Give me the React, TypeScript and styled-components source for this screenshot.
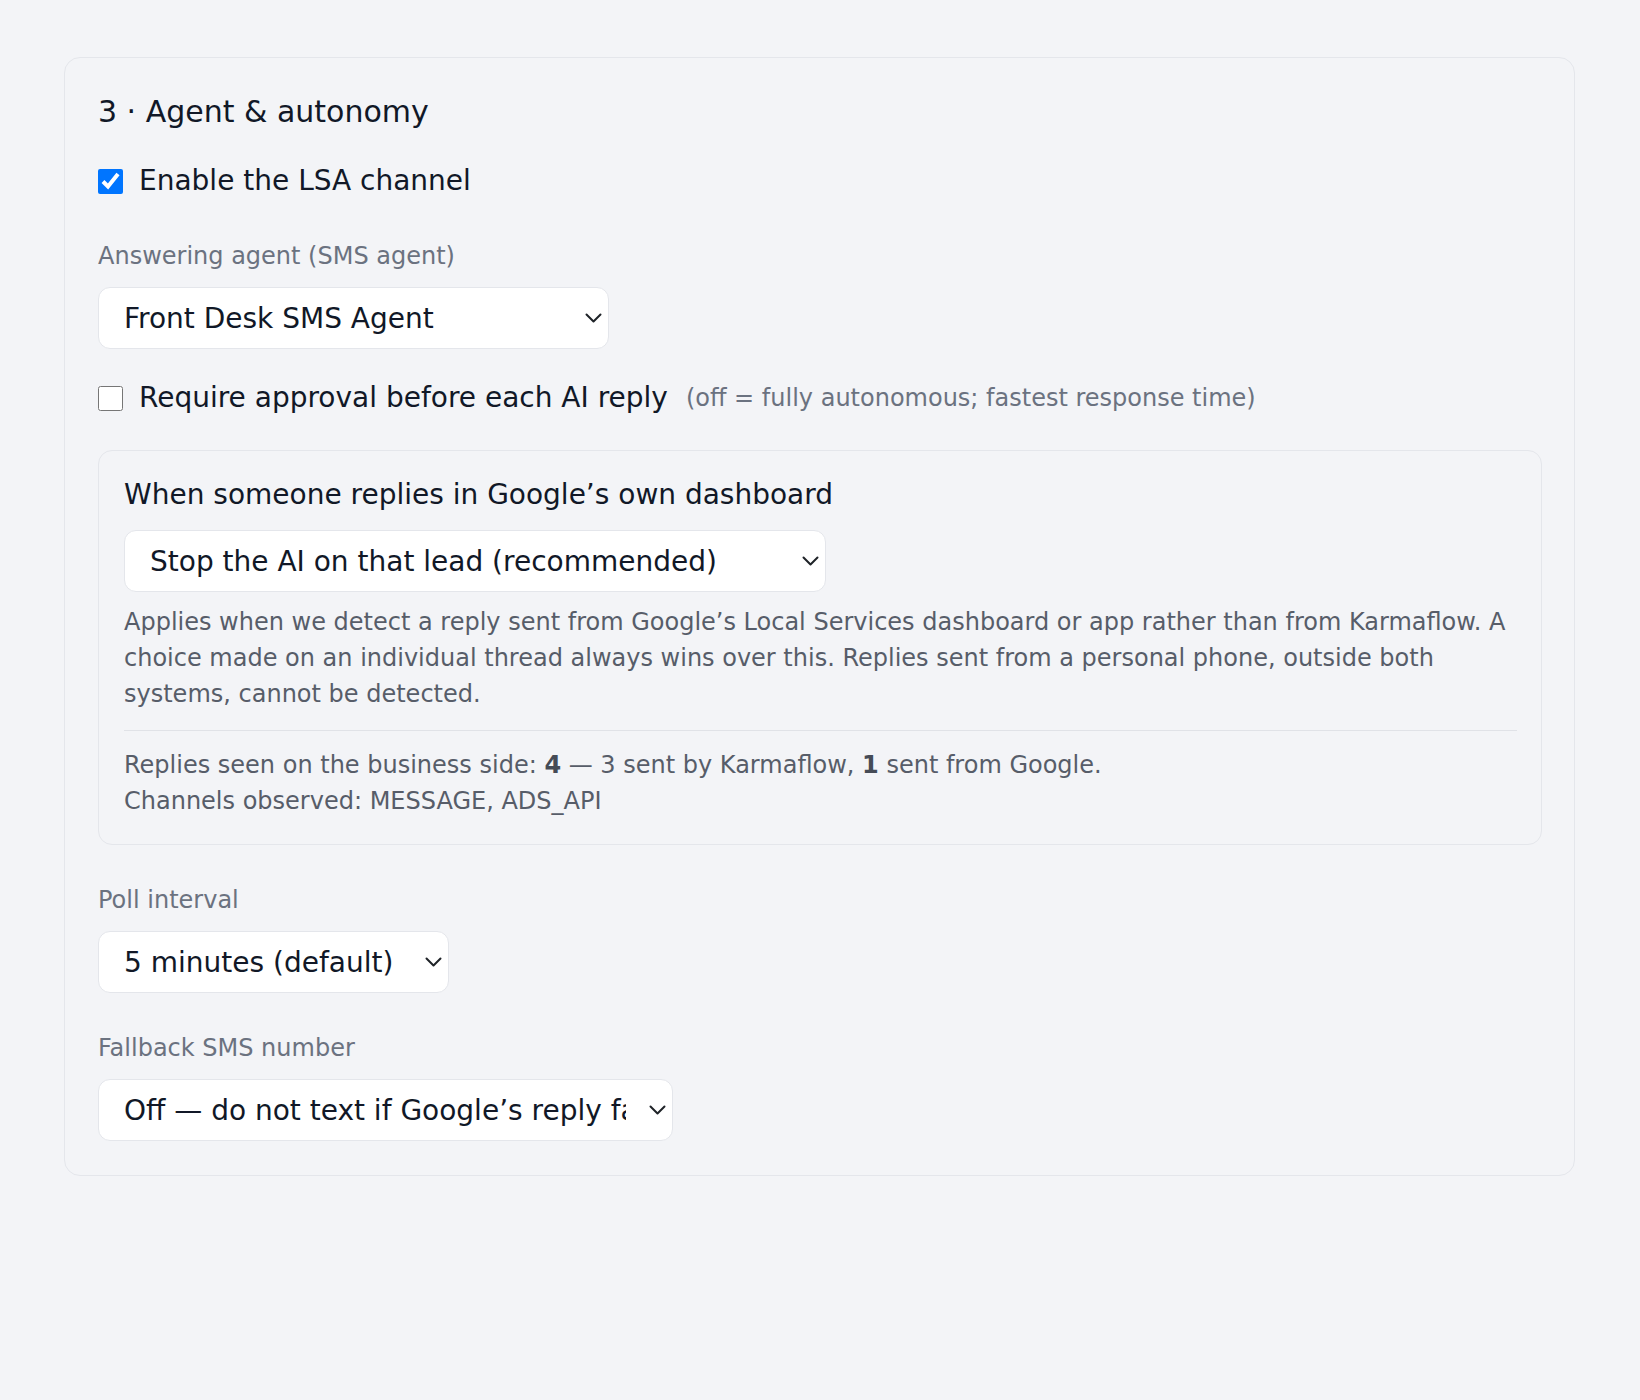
import React from 'react';
import styled, { createGlobalStyle } from 'styled-components';

const GlobalStyle = createGlobalStyle`
  html, body {
    margin: 0;
    background: #f3f4f7;
  }
  body {
    font-family: 'DejaVu Sans', 'Noto Sans', sans-serif;
    color: #111827;
  }
`;

const Page = styled('div')`
  padding: 57px 65px 80px 64px;
`;

const Card = styled('section')`
  border: 1px solid #e4e6eb;
  border-radius: 16px;
  padding: 32px 32px 34px 33px;
  display: flex;
  flex-direction: column;
  align-items: flex-start;
`;

const Title = styled('h2')`
  margin: 0 0 27px;
  font-size: 30px;
  font-weight: 400;
  line-height: 44px;
  color: #111827;
`;

const CheckRow = styled('label')<{ $spaced?: boolean }>`
  display: flex;
  align-items: center;
  gap: 16px;
  font-size: 28px;
  line-height: 40px;
  color: #111827;
  margin-top: ${(props) => (props.$spaced ? '29px' : '0')};
`;

const Checkbox = styled('input')`
  width: 25px;
  height: 25px;
  margin: 0;
  flex-shrink: 0;
`;

const Hint = styled('span')`
  font-size: 24px;
  color: #6b7280;
  margin-left: 2px;
`;

const FieldLabel = styled('label')`
  display: block;
  margin-top: 39px;
  font-size: 24px;
  line-height: 33px;
  color: #6b7280;
`;

const SelectWrap = styled('div')<{ $width: number; $gap?: number }>`
  position: relative;
  width: ${(props) => props.$width}px;
  margin-top: ${(props) => props.$gap ?? 14}px;
`;

const Select = styled('select')`
  display: block;
  width: 100%;
  height: 62px;
  padding: 0 46px 0 25px;
  appearance: none;
  font: inherit;
  font-size: 28px;
  color: #111827;
  background: #ffffff;
  border: 1px solid #e4e6eb;
  border-radius: 12px;
  text-overflow: clip;
`;

const Chevron = styled('svg')`
  position: absolute;
  right: 7px;
  top: 50%;
  width: 17px;
  height: 10px;
  margin-top: -5px;
  pointer-events: none;
`;

const Panel = styled('div')`
  align-self: stretch;
  margin-top: 32px;
  border: 1px solid #e4e6eb;
  border-radius: 14px;
  padding: 24px 24px 25px 25px;
  display: flex;
  flex-direction: column;
  align-items: flex-start;
`;

const PanelTitle = styled('h3')`
  margin: 0;
  font-size: 28px;
  font-weight: 400;
  line-height: 39px;
  color: #111827;
`;

const HelpText = styled('p')`
  margin: 12px 0 0;
  font-size: 24px;
  line-height: 36px;
  color: #575d69;
`;

const Divider = styled('hr')`
  align-self: stretch;
  margin: 18px 0 16px;
  border: 0;
  border-top: 1px solid #e0e2e7;
`;

const Stats = styled('div')`
  font-size: 24px;
  line-height: 36px;
  color: #575d69;

  strong {
    color: #454b56;
    font-weight: 700;
  }
`;

interface DropdownProps {
  id?: string;
  width: number;
  gap?: number;
  value: string;
  options: { value: string; label: string }[];
}

const Dropdown: React.FC<DropdownProps> = ({ id, width, gap, value, options }) => (
  <SelectWrap $width={width} $gap={gap}>
    <Select id={id} defaultValue={value}>
      {options.map((option) => (
        <option key={option.value} value={option.value}>
          {option.label}
        </option>
      ))}
    </Select>
    <Chevron viewBox="0 0 17 10" fill="none">
      <path d="M1.5 1.5l7 7 7-7" stroke="#1f2328" strokeWidth="2" strokeLinecap="round" strokeLinejoin="round" />
    </Chevron>
  </SelectWrap>
);

export default function App() {
  return (
    <>
      <GlobalStyle />
      <Page>
        <Card>
          <Title>3 · Agent &amp; autonomy</Title>

          <CheckRow>
            <Checkbox type="checkbox" defaultChecked />
            Enable the LSA channel
          </CheckRow>

          <FieldLabel htmlFor="answering-agent">Answering agent (SMS agent)</FieldLabel>
          <Dropdown
            id="answering-agent"
            width={511}
            value="front-desk"
            options={[
              { value: 'front-desk', label: 'Front Desk SMS Agent' },
              { value: 'after-hours', label: 'After Hours SMS Agent' },
            ]}
          />

          <CheckRow $spaced>
            <Checkbox type="checkbox" />
            Require approval before each AI reply
            <Hint>(off = fully autonomous; fastest response time)</Hint>
          </CheckRow>

          <Panel>
            <PanelTitle>When someone replies in Google’s own dashboard</PanelTitle>
            <Dropdown
              width={702}
              gap={16}
              value="stop"
              options={[
                { value: 'stop', label: 'Stop the AI on that lead (recommended)' },
                { value: 'continue', label: 'Keep the AI running on that lead' },
              ]}
            />
            <HelpText>
              Applies when we detect a reply sent from Google’s Local Services dashboard or app rather than
              from Karmaflow. A choice made on an individual thread always wins over this. Replies sent from a
              personal phone, outside both systems, cannot be detected.
            </HelpText>
            <Divider />
            <Stats>
              Replies seen on the business side: <strong>4</strong> — 3 sent by Karmaflow, <strong>1</strong> sent
              from Google.
              <br />
              Channels observed: MESSAGE, ADS_API
            </Stats>
          </Panel>

          <FieldLabel htmlFor="poll-interval">Poll interval</FieldLabel>
          <Dropdown
            id="poll-interval"
            width={351}
            value="5"
            options={[
              { value: '1', label: '1 minute' },
              { value: '5', label: '5 minutes (default)' },
              { value: '15', label: '15 minutes' },
            ]}
          />

          <FieldLabel htmlFor="fallback-sms">Fallback SMS number</FieldLabel>
          <Dropdown
            id="fallback-sms"
            width={575}
            value="off"
            options={[{ value: 'off', label: 'Off — do not text if Google’s reply fails' }]}
          />
        </Card>
      </Page>
    </>
  );
}
